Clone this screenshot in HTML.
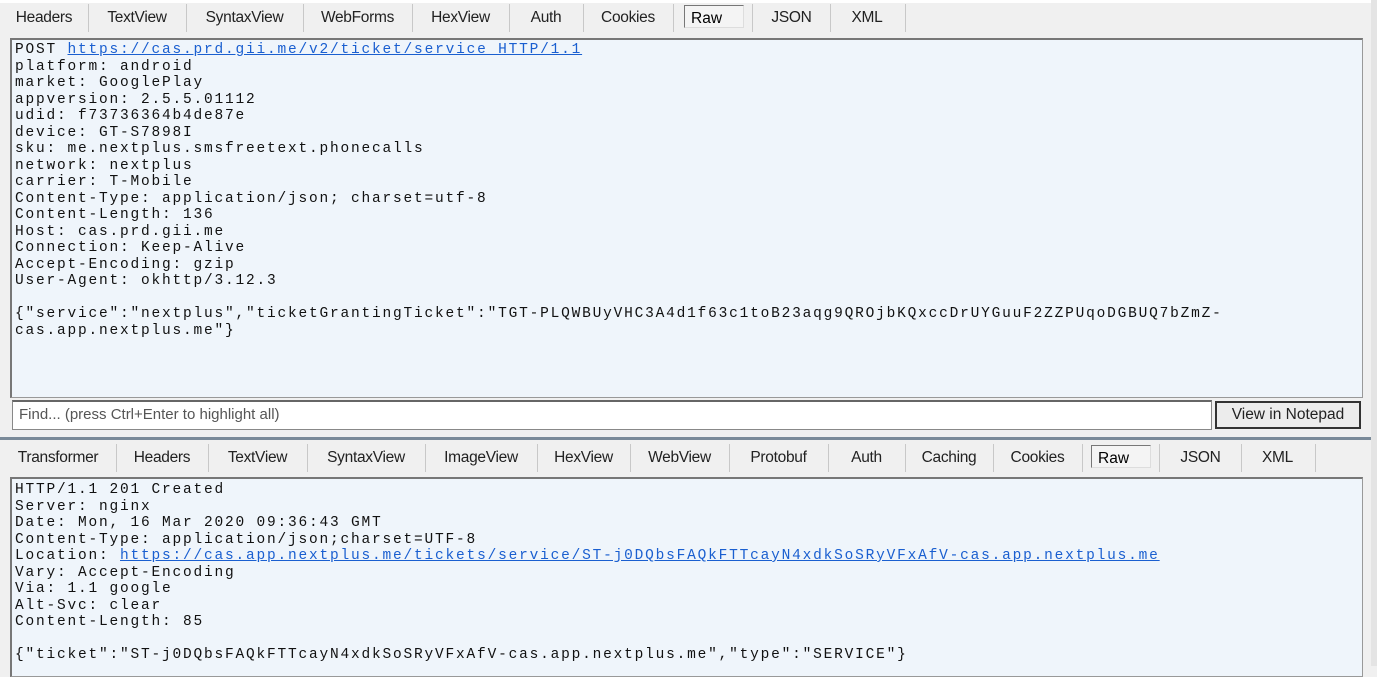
<html><head><style>
body{margin:0;width:1377px;height:666px;background:#f0f0f0;position:relative;overflow:hidden;font-family:"Liberation Sans",sans-serif}
.tabs{position:absolute;left:0;height:34px;width:1377px}
.t{position:absolute;top:4px;height:28px;border-right:1px solid #c8c8c8;font-size:15.5px;color:#222;line-height:28px;text-align:center;letter-spacing:-0.3px}
.raw{position:absolute;top:5px;height:23px;border:1px solid #777;border-right-color:#ddd;border-bottom-color:#ddd;background:#f4f4f4;font-size:15.5px;line-height:26px;padding-left:6px;box-sizing:border-box}
.box{position:absolute;left:10px;width:1353px;background:#eff5fb;border:1px solid #999;border-left:2px solid #777;border-top:2px solid #777;box-sizing:border-box}
pre{margin:0;position:absolute;left:3px;font-family:"Liberation Mono",monospace;font-size:14.5px;letter-spacing:1.8px;line-height:16.5px;color:#111}
a{color:#1a5fd0;text-decoration:underline}
</style></head><body>
<div style="position:absolute;left:0;top:0;width:1377px;height:3px;background:#fff"></div>
<div class="tabs" style="top:0">
<div class="t" style="left:0;width:88px">Headers</div>
<div class="t" style="left:88px;width:98px">TextView</div>
<div class="t" style="left:186px;width:117px">SyntaxView</div>
<div class="t" style="left:303px;width:109px">WebForms</div>
<div class="t" style="left:412px;width:97px">HexView</div>
<div class="t" style="left:509px;width:74px">Auth</div>
<div class="t" style="left:583px;width:90px">Cookies</div>
<div class="raw" style="left:684px;width:60px">Raw</div>
<div class="t" style="left:752px;width:77px;border-left:1px solid #c8c8c8">JSON</div>
<div class="t" style="left:829px;width:76px">XML</div>
</div>
<div class="box" style="top:38px;height:360px">
<pre style="top:2px">POST <a>https://cas.prd.gii.me/v2/ticket/service HTTP/1.1</a>
platform: android
market: GooglePlay
appversion: 2.5.5.01112
udid: f73736364b4de87e
device: GT-S7898I
sku: me.nextplus.smsfreetext.phonecalls
network: nextplus
carrier: T-Mobile
Content-Type: application/json; charset=utf-8
Content-Length: 136
Host: cas.prd.gii.me
Connection: Keep-Alive
Accept-Encoding: gzip
User-Agent: okhttp/3.12.3

{"service":"nextplus","ticketGrantingTicket":"TGT-PLQWBUyVHC3A4d1f63c1toB23aqg9QROjbKQxccDrUYGuuF2ZZPUqoDGBUQ7bZmZ-
cas.app.nextplus.me"}</pre>
</div>
<div style="position:absolute;left:12px;top:400px;width:1200px;height:30px;background:#fff;border:1px solid #888;border-top:2px solid #666;box-sizing:border-box;font-size:15px;color:#555;line-height:26px;padding-left:6px">Find... (press Ctrl+Enter to highlight all)</div>
<div style="position:absolute;left:1215px;top:401px;width:146px;height:28px;background:#ececec;border:2px solid #333;box-sizing:border-box;font-size:15.5px;line-height:24px;text-align:center;color:#222">View in Notepad</div>
<div style="position:absolute;left:0;top:437px;width:1371px;height:3px;background:#7a8a99"></div>
<div class="tabs" style="top:440px">
<div class="t" style="left:0;width:116px">Transformer</div>
<div class="t" style="left:116px;width:92px">Headers</div>
<div class="t" style="left:208px;width:99px">TextView</div>
<div class="t" style="left:307px;width:118px">SyntaxView</div>
<div class="t" style="left:425px;width:112px">ImageView</div>
<div class="t" style="left:537px;width:93px">HexView</div>
<div class="t" style="left:630px;width:99px">WebView</div>
<div class="t" style="left:729px;width:99px">Protobuf</div>
<div class="t" style="left:828px;width:77px">Auth</div>
<div class="t" style="left:905px;width:88px">Caching</div>
<div class="t" style="left:993px;width:89px">Cookies</div>
<div class="raw" style="left:1091px;width:60px">Raw</div>
<div class="t" style="left:1159px;width:81px;border-left:1px solid #c8c8c8">JSON</div>
<div class="t" style="left:1240px;width:75px">XML</div>
</div>
<div class="box" style="top:477px;height:200px">
<pre style="top:3px">HTTP/1.1 201 Created
Server: nginx
Date: Mon, 16 Mar 2020 09:36:43 GMT
Content-Type: application/json;charset=UTF-8
Location: <a>https://cas.app.nextplus.me/tickets/service/ST-j0DQbsFAQkFTTcayN4xdkSoSRyVFxAfV-cas.app.nextplus.me</a>
Vary: Accept-Encoding
Via: 1.1 google
Alt-Svc: clear
Content-Length: 85

{"ticket":"ST-j0DQbsFAQkFTTcayN4xdkSoSRyVFxAfV-cas.app.nextplus.me","type":"SERVICE"}</pre>
</div>
<div style="position:absolute;left:1371px;top:0;width:6px;height:666px;background:#e4e4e4"></div>
</body></html>
